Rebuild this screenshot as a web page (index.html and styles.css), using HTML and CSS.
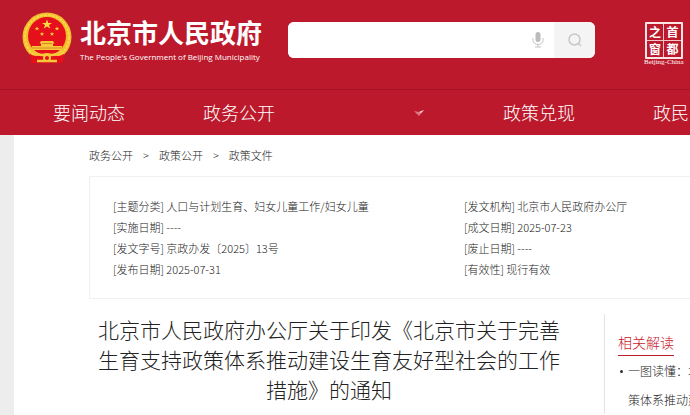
FILE: index.html
```
<!DOCTYPE html>
<html lang="zh-CN">
<head>
    <meta charset="UTF-8">
    <meta name="viewport" content="width=device-width, initial-scale=1.0">
    <title>北京市人民政府</title>
    <link rel="stylesheet" href="styles.css">
</head>
<body>

    <header class="header">
        <div class="top">
            <a class="logo" href="#">
                <svg class="emblem" viewBox="0 0 50 54" aria-hidden="true">
                    <circle cx="25" cy="25" r="24.5" fill="#f3bd2c"/>
                    <circle cx="25" cy="25" r="22" fill="none" stroke="#f9d64c" stroke-width="2" stroke-dasharray="3 1"/>
                    <circle cx="25" cy="24" r="19" fill="#e60f1c"/>
                    <path fill="#fbdc45" d="M25 7.500l1.300 3.400h3.700l-3 2.200 1.200 3.500-3.200-2.200-3.200 2.200 1.200-3.500-3-2.200h3.700z"/>
                    <path fill="#f7c93a" d="M15 14.500l.7 1.500h1.700l-1.400 1 .5 1.600-1.500-1-1.500 1 .5-1.600-1.400-1h1.700zM35 14.500l.7 1.500h1.700l-1.400 1 .5 1.600-1.500-1-1.500 1 .5-1.600-1.400-1h1.700zM20 20l.7 1.300h1.500l-1.200 1 .4 1.500-1.400-.9-1.400.9.400-1.500-1.200-1h1.500zM30 20l.7 1.300h1.500l-1.200 1 .4 1.500-1.400-.9-1.400.9.400-1.500-1.200-1h1.500z"/>
                    <path fill="#f7c93a" d="M19 29h12l1.500 2.500H31V34h9v4H10v-4h9v-2.500h-1.500z"/>
                    <path stroke="#d9881e" d="M10 36h30M20 31.500h10" fill="none"/>
                    <path fill="#e60f1c" d="M8 42c5 3 9 2 13 0 3-1 5-1 8 0 4 2 8 3 13 0l-1 8c-4 2-8 1-11 0-3 2-7 2-10 0-3 1-7 2-11 0z"/>
                    <path fill="none" stroke="#f7c93a" stroke-width="2.500" d="M10 39c3 3 6 4 11 4 3-1 5-1 8 0 5 0 8-1 11-4M15 49h20"/>
                    <circle cx="25" cy="46" r="3" fill="#e60f1c" stroke="#f7c93a" stroke-width="2"/>
                </svg>
                <span class="logo-text">
                    <strong>北京市人民政府</strong>
                    <span>The People's Government of Beijing Municipality</span>
                </span>
            </a>

            <form class="search">
                <input type="text" aria-label="搜索">
                <button class="voice" type="button" aria-label="语音">
                    <svg viewBox="0 0 12 16" aria-hidden="true">
                        <rect x="3.500" y="0" width="5" height="10" rx="2.500" fill="#bbb"/>
                        <path d="M1 6v2.500a5 4 0 0 0 10 0V6M6 12.500V15M3 15h6" fill="none" stroke="#c4c4c4"/>
                    </svg>
                </button>
                <button class="find" type="submit" aria-label="搜索">
                    <svg viewBox="0 0 14 14" aria-hidden="true">
                        <circle cx="6.500" cy="6.500" r="5.500" fill="none" stroke="#c8c8c8" stroke-width="1.500"/>
                        <path d="M10 10l3 3" stroke="#c8c8c8" stroke-width="1.500"/>
                    </svg>
                </button>
            </form>

            <a class="seal" href="#">
                <span class="seal-box">
                    <b>之</b><b>首</b>
                    <b>窗</b><b>都</b>
                </span>
                <span class="seal-name">Beijing-China</span>
            </a>
        </div>

        <nav class="nav-bar">
            <a href="#">要闻动态</a>
            <a href="#">政务公开</a>
            <span class="nav-mark">
                <svg viewBox="0 0 12 10" aria-hidden="true">
                    <path d="M1 3l5 1 5-2-5 6z" fill="#dc7780"/>
                    <path d="M6 4l5-2-3 3z" fill="#f6d5d8"/>
                </svg>
            </span>
            <a href="#">政策兑现</a>
            <a href="#">政民</a>
        </nav>
    </header>

    <main class="page">
        <div class="crumbs">
            <a href="#">政务公开</a>
            <span>&gt;</span>
            <a href="#">政策公开</a>
            <span>&gt;</span>
            <a href="#">政策文件</a>
        </div>

        <div class="doc-info">
            <ul>
                <li>[主题分类] 人口与计划生育、妇女儿童工作/妇女儿童</li>
                <li>[实施日期] ----</li>
                <li>[发文字号] 京政办发〔2025〕13号</li>
                <li>[发布日期] 2025-07-31</li>
            </ul>
            <ul>
                <li>[发文机构] 北京市人民政府办公厅</li>
                <li>[成文日期] 2025-07-23</li>
                <li>[废止日期] ----</li>
                <li>[有效性] 现行有效</li>
            </ul>
        </div>

        <div class="content">
            <h1>北京市人民政府办公厅关于印发《北京市关于完善<br>生育支持政策体系推动建设生育友好型社会的工作<br>措施》的通知</h1>
            <aside class="related">
                <h2>相关解读</h2>
                <ul>
                    <li><a href="#">一图读懂：北<br>策体系推动建</a></li>
                </ul>
            </aside>
        </div>
    </main>

</body>
</html>
```
FILE: styles.css
```
body, h1, h2, ul, li, button, input {
    margin: 0;
    padding: 0;
}

body {
    font-family: "Noto Sans CJK SC", sans-serif;
    font-weight: 300;
    color: #222;
    background-color: #ededed;
    overflow: hidden;
}

a {
    color: inherit;
    text-decoration: none;
}

ul {
    list-style: none;
}

svg {
    display: block;
}

.header {
    background-color: #bc1a2c;
    color: #fff;
}

.top {
    display: flex;
    box-sizing: border-box;
    height: 89px;
    padding-left: 22px;
    overflow: hidden;
}

.logo {
    display: flex;
    flex: none;
    width: 266px;
    padding-top: 12px;
    gap: 8px;
}

.emblem {
    width: 50px;
    height: 54px;
}

.logo-text {
    display: flex;
    flex-direction: column;
    padding-top: 5px;
    white-space: nowrap;
}

.logo-text strong {
    font-size: 26px;
    font-weight: 700;
    line-height: 30px;
}

.logo-text span {
    font-family: "Open Sans", sans-serif;
    font-size: 8px;
    font-weight: 400;
    line-height: 20px;
}

.search {
    display: flex;
    flex: none;
    width: 307px;
    height: 36px;
    margin-top: 22px;
    background-color: #fff;
    border-radius: 6px;
    overflow: hidden;
}

.search input {
    flex: 1;
    min-width: 0;
    padding: 0 12px;
    border: none;
    outline: none;
}

.search button {
    display: flex;
    align-items: center;
    justify-content: center;
    border: none;
    background-color: #fff;
    cursor: pointer;
}

.search .voice {
    width: 32px;
}

.search .find {
    width: 41px;
    background-color: #f4f4f4;
}

.voice svg {
    width: 12px;
    height: 16px;
}

.find svg {
    width: 14px;
    height: 14px;
}

.seal {
    display: flex;
    flex: none;
    flex-direction: column;
    align-items: center;
    margin: 22px 0 0 49px;
}

.seal-box {
    display: grid;
    grid-template-columns: 1fr 1fr;
    gap: 1px;
    box-sizing: border-box;
    width: 38px;
    border: 2px solid #fbe4e4;
    border-radius: 1px;
    background-color: #f0c4c8;
}

.seal-box b {
    background-color: #bc1a2c;
    font-size: 12px;
    font-weight: 700;
    line-height: 16px;
    text-align: center;
}

.seal-name {
    font-family: "Liberation Serif", serif;
    font-size: 7px;
    font-weight: 400;
    line-height: 7px;
}

.nav-bar {
    display: flex;
    border-top: 1px solid #a31424;
    padding-left: 53px;
    overflow: hidden;
}

.nav-bar a, .nav-mark {
    flex: none;
    width: 150px;
    font-size: 18px;
    line-height: 45px;
    white-space: nowrap;
}

.nav-mark {
    display: flex;
    align-items: center;
    justify-content: center;
}

.nav-mark svg {
    width: 12px;
    height: 10px;
    margin-left: -18px;
}

.page {
    margin-left: 14px;
    padding-left: 75px;
    min-height: 280px;
    background-color: #fff;
}

.crumbs {
    display: flex;
    gap: 10px;
    font-size: 11px;
    line-height: 41px;
}

.doc-info {
    display: grid;
    grid-template-columns: 351px 1fr;
    padding: 19px 0 18px 23px;
    border: 1px solid #f0f0f0;
    border-right: none;
    font-size: 11px;
    line-height: 21px;
    white-space: nowrap;
}

.content {
    display: flex;
    padding-top: 15px;
}

h1 {
    flex: none;
    box-sizing: border-box;
    width: 515px;
    padding-right: 35px;
    font-size: 21px;
    font-weight: 300;
    line-height: 30px;
    text-align: center;
    white-space: nowrap;
}

.related {
    flex: 1;
    min-width: 0;
    padding: 16px 0 0 13px;
    border-left: 1px solid #e8e2d8;
    overflow: hidden;
    white-space: nowrap;
}

.related h2 {
    width: fit-content;
    border-bottom: 1px solid #bc1a2c;
    color: #c8182a;
    font-size: 14px;
    font-weight: 300;
    line-height: 25px;
}

.related li {
    position: relative;
    padding-left: 10px;
    font-size: 12px;
    line-height: 29px;
}

.related li::before {
    content: "";
    position: absolute;
    left: 2px;
    top: 14px;
    width: 3px;
    height: 3px;
    border-radius: 50%;
    background-color: #333;
}
```
